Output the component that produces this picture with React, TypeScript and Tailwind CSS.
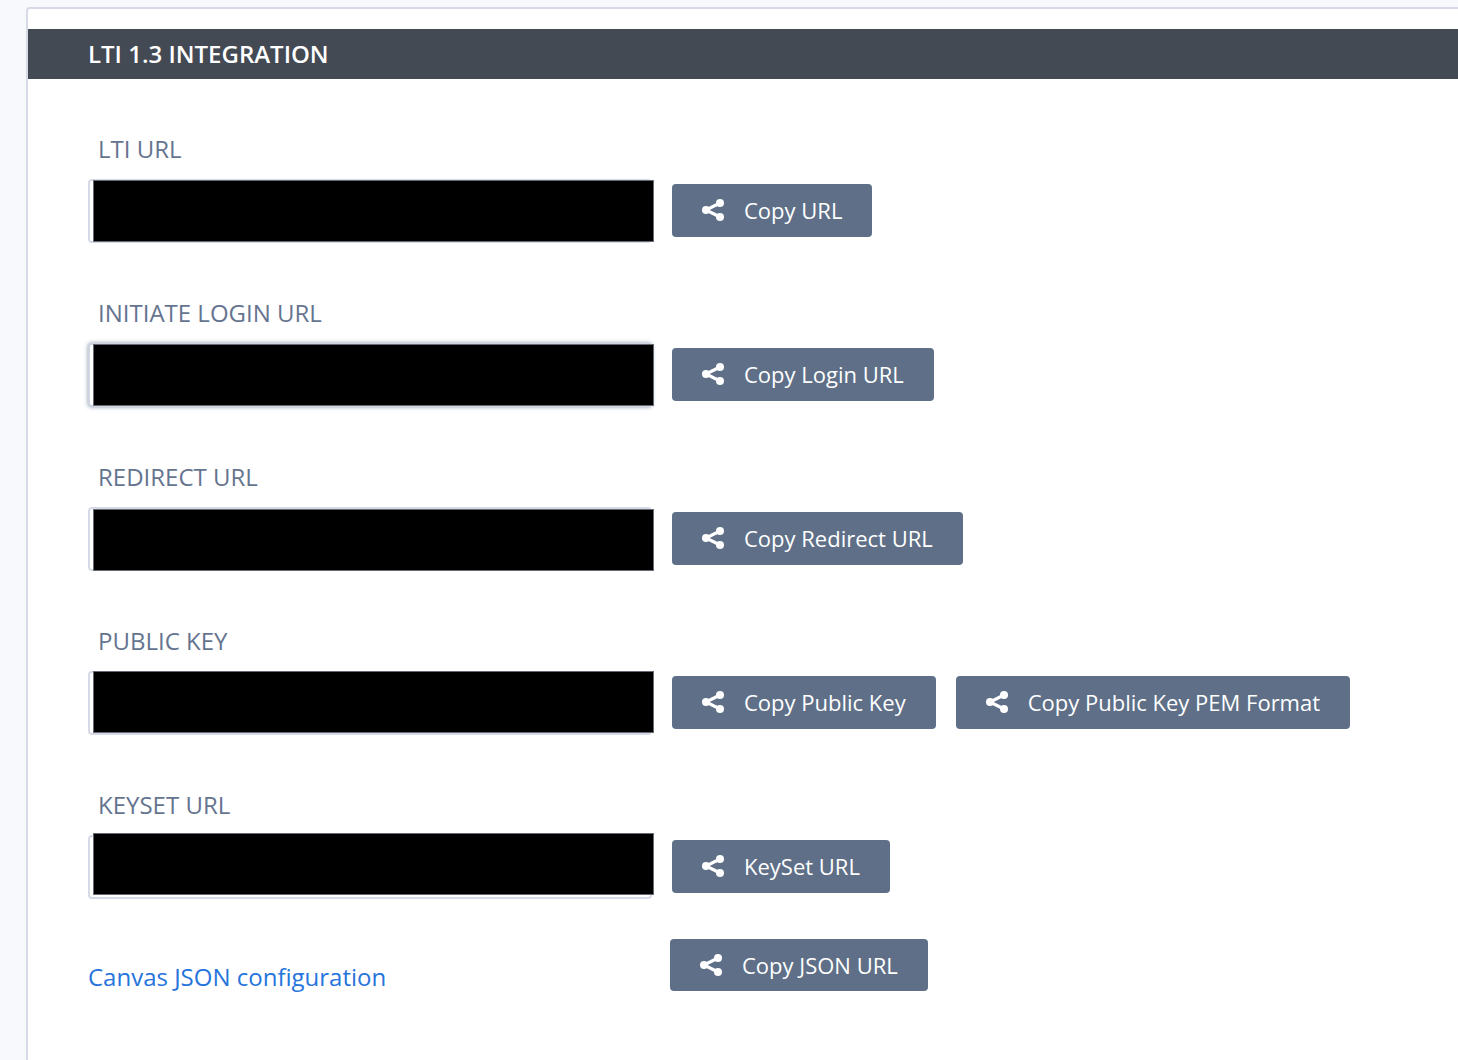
type Field = { id: string; label: string; buttons: string[]; box: string; cover: string };

const edge = "border-[#d5dae6]";
const fields: Field[] = [
  { id: "lti", label: "LTI URL", buttons: ["Copy URL"], box: edge, cover: "top-px" },
  { id: "login", label: "INITIATE LOGIN URL", buttons: ["Copy Login URL"], box: "border-[#cdd4df] shadow-[0_0_4px_#8a97ab]", cover: "top-px" },
  { id: "redirect", label: "REDIRECT URL", buttons: ["Copy Redirect URL"], box: edge, cover: "top-[2px]" },
  { id: "key", label: "PUBLIC KEY", buttons: ["Copy Public Key", "Copy Public Key PEM Format"], box: edge, cover: "top-0" },
  { id: "keyset", label: "KEYSET URL", buttons: ["KeySet URL"], box: edge, cover: "-top-[2px]" },
];

function ShareIcon() {
  return (
    <svg viewBox="0 0 22 22" className="size-[22px] shrink-0" fill="currentColor" aria-hidden="true">
      <path d="M18 4 4 11l14 7" fill="none" stroke="currentColor" strokeWidth="3.2" />
      <circle cx="4" cy="11" r="4" />
      <circle cx="18" cy="4" r="4" />
      <circle cx="18" cy="18" r="4" />
    </svg>
  );
}

function CopyButton({ label, size = "h-[53px] pb-px" }: { label: string; size?: string }) {
  return (
    <button type="button" className={`flex items-center gap-5 rounded-[4px] bg-[#5e6f87] px-[30px] text-[22px] font-medium whitespace-nowrap text-white ${size}`}>
      <ShareIcon />
      {label}
    </button>
  );
}

export default function App() {
  return (
    <div className="min-h-screen bg-[#f8f9fd] pt-[7px] pl-[26px] font-['Open_Sans',sans-serif]">
      <main className="min-h-[1053px] rounded-tl-[4px] border-t-2 border-l-2 border-[#d5dae6] bg-white pt-5">
        <h1 className="flex h-[50px] items-center bg-[#434a54] pl-[60px] text-2xl font-semibold text-white">LTI 1.3 INTEGRATION</h1>
        <div className="flex flex-col gap-13 pt-13 pl-[60px]">
          {fields.map((f) => (
            <div key={f.id} className="flex flex-col gap-3">
              <label htmlFor={f.id} className="pl-[10px] text-2xl leading-9 font-medium text-[#65748f]">{f.label}</label>
              <div className="flex items-start gap-5">
                <div className="relative w-[564px]">
                  <input id={f.id} readOnly className={`block h-16 w-full rounded-[4px] border-2 bg-white ${f.box}`} />
                  <div className={`absolute -right-[2px] left-[5px] h-[62px] border border-[#666b73] bg-black ${f.cover}`} />
                </div>
                <div className="flex gap-5 pt-[5px]">
                  {f.buttons.map((b) => <CopyButton key={b} label={b} />)}
                </div>
              </div>
            </div>
          ))}
        </div>
        <div className="mt-10 flex items-start pl-[60px]">
          <a href="#canvas" className="w-[582px] pt-[22px] text-2xl font-medium text-[#2674dc]">Canvas JSON configuration</a>
          <CopyButton label="Copy JSON URL" size="h-[52px]" />
        </div>
      </main>
    </div>
  );
}
